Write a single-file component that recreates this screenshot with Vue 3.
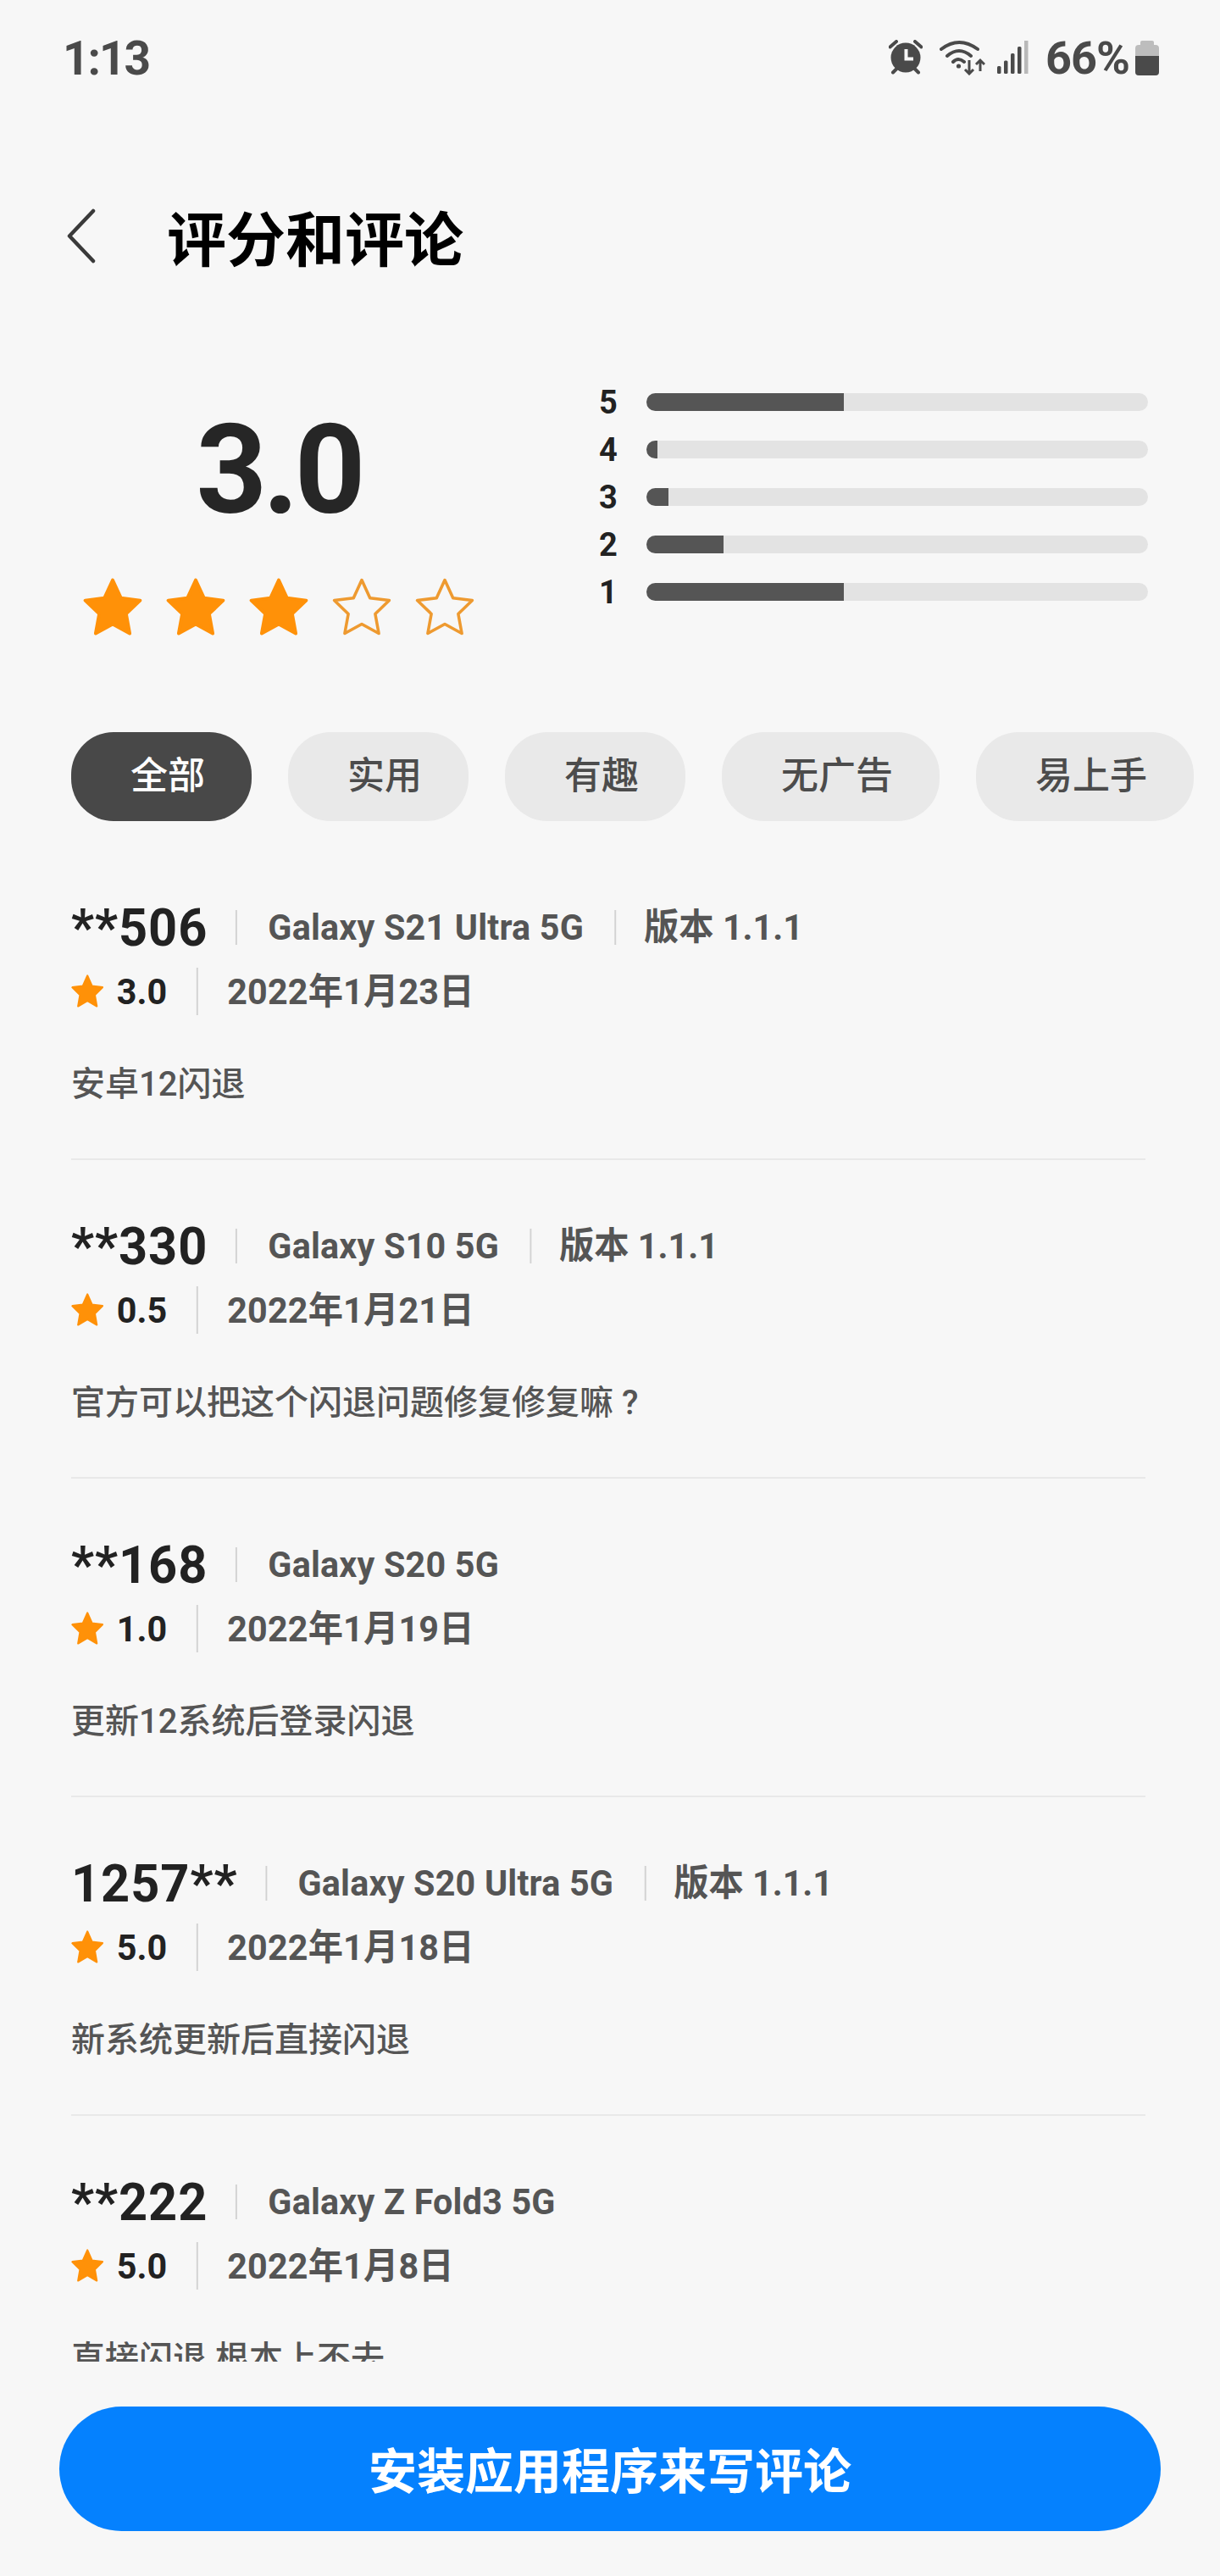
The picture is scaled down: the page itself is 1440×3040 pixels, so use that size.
<script setup>
import { ref } from "vue";

const summary = [
  { label: 5, percent: 39.4 },
  { label: 4, percent: 2.2 },
  { label: 3, percent: 4.4 },
  { label: 2, percent: 15.4 },
  { label: 1, percent: 39.4 },
];

const chips = ["全部", "实用", "有趣", "无广告", "易上手"];
const active = ref(0);

const reviews = [
  { name: "**506", device: "Galaxy S21 Ultra 5G", version: "版本 1.1.1", score: "3.0", date: "2022年1月23日", text: "安卓12闪退" },
  { name: "**330", device: "Galaxy S10 5G", version: "版本 1.1.1", score: "0.5", date: "2022年1月21日", text: "官方可以把这个闪退问题修复修复嘛 ?" },
  { name: "**168", device: "Galaxy S20 5G", version: "", score: "1.0", date: "2022年1月19日", text: "更新12系统后登录闪退" },
  { name: "1257**", device: "Galaxy S20 Ultra 5G", version: "版本 1.1.1", score: "5.0", date: "2022年1月18日", text: "新系统更新后直接闪退" },
  { name: "**222", device: "Galaxy Z Fold3 5G", version: "", score: "5.0", date: "2022年1月8日", text: "直接闪退 根本上不去" },
];

const starPoints = "12,2.2 15,8.7 22,9.6 16.9,14.5 18.2,21.6 12,18.2 5.8,21.6 7.1,14.5 2,9.6 9,8.7";
</script>

<template>
  <div class="page">
    <div class="status">
      <span class="time">1:13</span>
      <div class="status-right">
        <svg class="alarm" width="40" height="42" viewBox="0 0 40 42">
          <circle cx="20" cy="21" r="17.5" fill="#4a4a4a" />
          <path d="M1.5 8.5L9 2M38.5 8.5L31 2M5 38.5L9 34.5M35 38.5L31 34.5" stroke="#4a4a4a" stroke-width="4" stroke-linecap="round" />
          <path d="M20.5 11V22.5H29" fill="none" stroke="#f7f7f7" stroke-width="4" />
        </svg>
        <svg class="wifi" width="54" height="42" viewBox="0 0 54 42">
          <path d="M2 11Q23 -5 45 11M9 19Q23 7 37 19M16 26Q22 20 29 26" fill="none" stroke="#4a4a4a" stroke-width="4" stroke-linecap="round" />
          <circle cx="22.5" cy="31" r="2.6" fill="#4a4a4a" />
          <path d="M35 24V40M30 35L35 40L40 35M48 37V24M43 29L48 24L53 29" fill="none" stroke="#4a4a4a" stroke-width="3" />
        </svg>
        <svg class="signal" width="37" height="41" viewBox="0 0 37 41">
          <rect x="0" y="30" width="4.5" height="9" rx="1.5" fill="#4a4a4a" />
          <rect x="8" y="23.5" width="4.5" height="15.5" rx="1.5" fill="#4a4a4a" />
          <rect x="16" y="15" width="4.5" height="24" rx="1.5" fill="#4a4a4a" />
          <rect x="24" y="7" width="4.5" height="32" rx="1.5" fill="#4a4a4a" />
          <rect x="32" y="0" width="4.5" height="39" fill="#b9b9b9" />
        </svg>
        <span class="percent">66%</span>
        <svg class="battery" width="28" height="43" viewBox="0 0 28 43">
          <path d="M6 6V3Q6 1 8 1H20Q22 1 22 3V6H24Q28 6 28 10V19H0V10Q0 6 4 6Z" fill="#bdbdbd" />
          <path d="M0 19H28V38Q28 42 24 42H4Q0 42 0 38Z" fill="#4a4a4a" />
        </svg>
      </div>
    </div>

    <div class="header">
      <svg class="back" width="36" height="65" viewBox="0 0 36 65">
        <path d="M32 3L4 32.5L32 62" fill="none" stroke="#3a3a3a" stroke-width="4.5" stroke-linecap="round" stroke-linejoin="round" />
      </svg>
      <h1>评分和评论</h1>
    </div>

    <div class="summary">
      <div class="score">
        <div class="score-num">3.0</div>
        <div class="stars">
          <svg v-for="n in 5" :key="n" width="70" height="70" viewBox="1.2 1.4 21.6 21.6">
            <polygon v-if="n <= 3" :points="starPoints" fill="#ff9108" stroke="#ff9108" stroke-width="1.2" stroke-linejoin="round" />
            <polygon v-else :points="starPoints" fill="none" stroke="#ee9a30" stroke-width="1.1" stroke-linejoin="round" />
          </svg>
        </div>
      </div>
      <div class="bars">
        <div v-for="row in summary" :key="row.label" class="bar-row">
          <span class="bar-label">{{ row.label }}</span>
          <div class="track">
            <div class="fill" :style="{ width: row.percent + '%' }"></div>
          </div>
        </div>
      </div>
    </div>

    <div class="chips">
      <span
        v-for="(chip, i) in chips"
        :key="chip"
        class="chip"
        :class="{ on: active === i }"
        @click="active = i"
      >{{ chip }}</span>
    </div>

    <div class="list">
      <div v-for="r in reviews" :key="r.name" class="review">
        <div class="row-top">
          <span class="name">{{ r.name }}</span>
          <i class="sep"></i>
          <span class="meta">{{ r.device }}</span>
          <template v-if="r.version">
            <i class="sep"></i>
            <span class="meta version">{{ r.version }}</span>
          </template>
        </div>
        <div class="row-rate">
          <svg class="mini-star" width="40" height="40" viewBox="1.2 1.4 21.6 21.6">
            <polygon :points="starPoints" fill="#ff9108" stroke="#ff9108" stroke-width="1.2" stroke-linejoin="round" />
          </svg>
          <span class="rate">{{ r.score }}</span>
          <i class="sep tall"></i>
          <span class="meta">{{ r.date }}</span>
        </div>
        <p class="text">{{ r.text }}</p>
      </div>
    </div>

    <div class="footer">
      <button class="install">安装应用程序来写评论</button>
    </div>
  </div>
</template>

<style>
body {
  background: #f7f7f7;
}
</style>

<style scoped>
.page {
  height: 3040px;
  display: flex;
  flex-direction: column;
  overflow: hidden;
  background: #f7f7f7;
  font-family: Roboto, "Noto Sans CJK SC", sans-serif;
}

.status {
  height: 136px;
  flex: none;
  display: flex;
  justify-content: space-between;
  align-items: center;
  padding: 0 72px 0 74px;
  color: #4a4a4a;
}

.time {
  margin-top: 2px;
  font-size: 55px;
  font-weight: 700;
  letter-spacing: -2px;
}

.status-right {
  display: flex;
  align-items: center;
}

.wifi {
  margin-left: 20px;
}

.signal {
  margin-left: 14px;
}

.percent {
  margin-left: 20px;
  font-size: 54px;
  font-weight: 700;
  letter-spacing: -1px;
}

.battery {
  margin-left: 7px;
}

.header {
  flex: none;
  height: 100px;
  margin-top: 92px;
  display: flex;
  align-items: center;
  padding-left: 78px;
}

.back {
  margin-right: 83px;
}

h1 {
  margin: 0;
  font-size: 70px;
  font-weight: 700;
  color: #000;
}

.summary {
  flex: none;
  height: 330px;
  margin-top: 118px;
  display: flex;
}

.score {
  width: 707px;
  padding-left: 98px;
  box-sizing: border-box;
}

.score-num {
  width: 462px;
  margin-top: 36px;
  text-align: center;
  font-size: 146px;
  line-height: 148px;
  font-weight: 700;
  color: #262626;
  letter-spacing: -5px;
}

.stars {
  display: flex;
  gap: 28px;
  margin-top: 52px;
}

.bars {
  width: 648px;
}

.bar-row {
  height: 56px;
  display: flex;
  align-items: center;
}

.bar-label {
  width: 56px;
  padding-top: 2px;
  font-size: 38px;
  font-weight: 700;
  color: #222;
}

.track {
  flex: 1;
  height: 21px;
  border-radius: 11px;
  background: #e3e3e3;
  overflow: hidden;
}

.fill {
  height: 100%;
  background: #555;
}

.chips {
  flex: none;
  display: flex;
  gap: 43px;
  margin-top: 88px;
  padding-left: 84px;
}

.chip {
  height: 105px;
  line-height: 105px;
  padding: 0 55px 0 70px;
  border-radius: 50px;
  background: #e9e9e9;
  color: #4c4c4c;
  font-size: 44px;
  font-weight: 500;
  cursor: pointer;
}

.chip.on {
  background: #484848;
  color: #fff;
}

.list {
  flex: 1;
  min-height: 0;
  margin-top: 24px;
  overflow: hidden;
}

.review {
  height: 376px;
  box-sizing: border-box;
  margin: 0 88px 0 84px;
  padding-top: 72px;
  border-bottom: 2px solid #e9e9e9;
}

.row-top,
.row-rate {
  height: 56px;
  box-sizing: border-box;
  display: flex;
  align-items: center;
  transform: scaleX(0.96);
  transform-origin: left center;
  white-space: nowrap;
}

.row-top {
  padding-top: 2px;
}

.row-rate {
  margin-top: 21px;
}

.name {
  margin-right: -4px;
  font-size: 62px;
  font-weight: 700;
  letter-spacing: 1px;
  color: #222;
}

.meta {
  font-size: 43px;
  line-height: 56px;
  font-weight: 700;
  letter-spacing: 0.2px;
  color: #555;
}

.version {
  margin-left: -4px;
  letter-spacing: 0;
}

.sep {
  width: 2px;
  height: 41px;
  margin: 0 38px;
  background: #d2d2d2;
}

.sep.tall {
  height: 56px;
  margin: 0 36px;
}

.rate {
  margin-left: 16px;
  font-size: 43px;
  line-height: 56px;
  font-weight: 700;
  color: #222;
}

.text {
  margin: 53px 0 0;
  font-size: 40px;
  line-height: 58px;
  font-weight: 500;
  color: #555;
  white-space: nowrap;
}

.footer {
  flex: none;
  padding: 53px 70px;
}

.install {
  display: block;
  width: 100%;
  height: 147px;
  padding: 0 0 4px;
  border: none;
  border-radius: 74px;
  background: #0581fe;
  color: #fff;
  font-family: inherit;
  font-size: 57px;
  font-weight: 700;
}
</style>
